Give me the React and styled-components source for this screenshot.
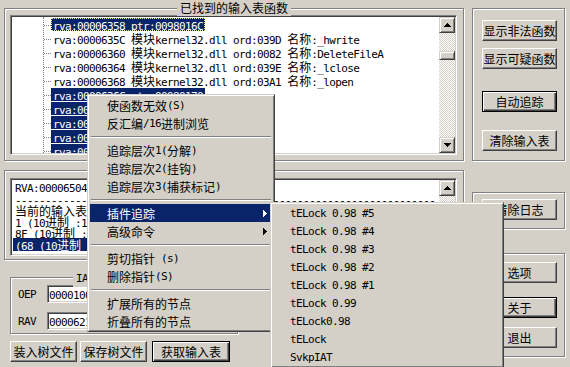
import React from 'react';
import styled, { createGlobalStyle, css } from 'styled-components';

const FACE = '#d4d0c8';
const SHADOW = '#808080';
const DARK = '#404040';
const HILITE = '#0a246a';

const GlobalStyle = createGlobalStyle`
  html, body { margin: 0; padding: 0; background: ${FACE}; }
  body {
    width: 570px;
    height: 367px;
    overflow: hidden;
    font-family: "Noto Sans CJK SC", "Noto Sans", sans-serif;
    font-size: 12px;
    color: #000;
  }
  * { box-sizing: border-box; }
`;

// ---- mixed text: half-width mono for ascii, 12px for han ----
const CJK_RE = /([\u2e80-\u9fff\u3000-\u303f\uff00-\uffef]+)/;

const Ascii = styled.span`
  font-family: "DejaVu Sans Mono", "Liberation Mono", monospace;
  font-size: 11px;
  letter-spacing: -0.62px;
  white-space: pre;
`;

const Han = styled.span`
  font-family: "Noto Sans CJK SC", sans-serif;
  font-size: 12px;
  white-space: pre;
`;

const Txt = ({ children }) =>
  String(children)
    .split(CJK_RE)
    .filter(Boolean)
    .map((part, i) => (CJK_RE.test(part) ? <Han key={i}>{part}</Han> : <Ascii key={i}>{part}</Ascii>));

// ---- bevels ----
const raised = css`
  border: 1px solid;
  border-color: ${FACE} ${DARK} ${DARK} ${FACE};
  box-shadow: inset 1px 1px 0 #fff, inset -1px -1px 0 ${SHADOW};
`;

const sunken = css`
  border: 1px solid;
  border-color: ${SHADOW} #fff #fff ${SHADOW};
  box-shadow: inset 1px 1px 0 ${DARK}, inset -1px -1px 0 ${FACE};
  padding: 1px;
`;

// ---- layout ----
const Window = styled.div`
  position: relative;
  width: 570px;
  height: 367px;
  display: flex;
  gap: 8px;
  padding-left: 4px;
`;

const Column = styled.div`
  width: ${p => p.$w}px;
  flex-shrink: 0;
  display: flex;
  flex-direction: column;
`;

const Group = styled.div`
  position: relative;
  flex-shrink: 0;
  height: ${p => p.$h}px;
  width: ${p => (p.$w ? `${p.$w}px` : 'auto')};
  margin-top: ${p => p.$mt || 0}px;
  padding: ${p => p.$pad || '0'};
  border: 1px solid ${SHADOW};
  box-shadow: inset 1px 1px 0 #fff, 1px 1px 0 #fff;
  display: flex;
  flex-direction: column;
  align-items: flex-start;
`;

const GroupTitle = styled.span`
  position: absolute;
  top: -9px;
  left: 50%;
  transform: translateX(-50%);
  padding: 0 3px;
  line-height: 16px;
  background: ${FACE};
  white-space: nowrap;
`;

const Button = styled.button`
  width: ${p => p.$w || 75}px;
  height: 21px;
  margin: ${p => p.$mt || 0}px 0 0 ${p => p.$ml || 0}px;
  padding: 0;
  flex-shrink: 0;
  display: flex;
  align-items: center;
  justify-content: center;
  background: ${FACE};
  color: #000;
  font-family: "Noto Sans CJK SC", sans-serif;
  font-size: 12px;
  line-height: 1;
  white-space: nowrap;
  border: 1px solid;
  border-color: #fff ${DARK} ${DARK} #fff;
  box-shadow: inset -1px -1px 0 ${SHADOW};
  ${p =>
    p.$default &&
    css`
      border-color: #000;
      box-shadow: inset 1px 1px 0 #fff, inset -1px -1px 0 ${DARK}, inset -2px -2px 0 ${SHADOW};
    `}
`;

// ---- list boxes ----
const ListFrame = styled.div`
  ${sunken};
  width: ${p => p.$w}px;
  height: ${p => p.$h}px;
  display: flex;
  flex-shrink: 0;
`;

const WhiteArea = styled.div`
  flex: 1;
  background: #fff;
  overflow: hidden;
  padding-left: ${p => p.$pl || 0}px;
`;

const ScrollBar = styled.div`
  width: 16px;
  flex-shrink: 0;
  display: flex;
  flex-direction: column;
  background: repeating-conic-gradient(#fff 0 25%, ${FACE} 0 50%) 0 0 / 2px 2px;
`;

const ScrollButton = styled.div`
  ${raised};
  width: 16px;
  height: ${p => p.$h || 16}px;
  margin-top: ${p => (p.$auto ? 'auto' : `${p.$mt || 0}px`)};
  flex-shrink: 0;
  background-color: ${FACE};
  display: flex;
  align-items: center;
  justify-content: center;
`;

const ArrowIcon = ({ dir, color = '#000' }) => {
  const d = {
    up: 'M3 0h1v1h1v1h1v1h1v1H0V3h1V2h1V1h1z',
    down: 'M0 0H7v1h-1v1h-1v1h-1v1h-1V3h-1V2h-1V1H0z',
    right: 'M0 0h1v1h1v1h1v1h1v1h-1v1h-1v1h-1v1H0z',
  }[dir];
  const size = dir === 'right' ? [4, 7] : [7, 4];
  return (
    <svg width={size[0]} height={size[1]} viewBox={`0 0 ${size[0]} ${size[1]}`} shapeRendering="crispEdges">
      <path d={d} fill={color} />
    </svg>
  );
};

// tree
const TreeLines = styled.div`
  margin-left: 31px;
  height: 100%;
  padding-top: 1px;
  border-left: 1px dotted ${SHADOW};
`;

const TreeRow = styled.div`
  height: 14px;
  display: flex;
  align-items: flex-start;
`;

const Connector = styled.span`
  width: 7px;
  margin-top: 7px;
  border-top: 1px dotted ${SHADOW};
  flex-shrink: 0;
`;

const TreeLabel = styled.span`
  height: 13px;
  line-height: 13px;
  padding: 0 2px;
  white-space: pre;
  ${p =>
    p.$sel &&
    css`
      background: ${HILITE};
      color: #fff;
    `}
  ${p => p.$focus && css`outline: 1px dotted #e8e0a0; outline-offset: -1px;`}
`;

// log
const LogRow = styled.div`
  height: ${p => p.$h || 11}px;
  line-height: ${p => p.$h || 11}px;
  padding-left: 2px;
  white-space: pre;
  ${p =>
    p.$sel &&
    css`
      background: ${HILITE};
      color: #fff;
    `}
`;

// IAT fields
const FieldRow = styled.div`
  display: flex;
  align-items: center;
  height: 18px;
  margin-top: ${p => p.$mt || 0}px;
`;

const FieldLabel = styled.span`
  width: 29px;
  line-height: 18px;
`;

const Field = styled.div`
  ${sunken};
  width: 80px;
  height: 18px;
  background: #fff;
  padding-left: 1px;
  line-height: 14px;
`;

const ButtonRow = styled.div`
  display: flex;
  margin-top: ${p => p.$mt || 0}px;
`;

const Bottom = styled.div`
  padding-left: 6px;
  margin-top: 17px;
  display: flex;
  flex-direction: column;
`;

// ---- menus ----
const Menu = styled.div`
  position: absolute;
  left: ${p => p.$x}px;
  top: ${p => p.$y}px;
  width: ${p => p.$w}px;
  z-index: ${p => p.$z || 10};
  background: ${FACE};
  border: 1px solid;
  border-color: ${FACE} ${DARK} ${DARK} ${FACE};
  box-shadow: inset 1px 1px 0 #fff, inset -1px -1px 0 ${SHADOW};
  padding: 1px 2px;
`;

const MenuItem = styled.div`
  height: 18px;
  display: flex;
  align-items: center;
  padding-left: 17px;
  white-space: pre;
  ${p =>
    p.$hot &&
    css`
      background: ${HILITE};
      color: #fff;
    `}
`;

const SubArrow = styled.span`
  margin-left: auto;
  margin-right: 5px;
  display: flex;
`;

const MenuSep = styled.div`
  height: 9px;
  display: flex;
  align-items: center;
  margin: 0 1px;
  &::after {
    content: '';
    width: 100%;
    border-top: 1px solid ${SHADOW};
    border-bottom: 1px solid #fff;
  }
`;

const treeRows = [
  { text: 'rva:00006358 ptr:0098016C', sel: true, focus: true },
  { text: 'rva:0000635C 模块kernel32.dll ord:039D 名称:_hwrite' },
  { text: 'rva:00006360 模块kernel32.dll ord:0082 名称:DeleteFileA' },
  { text: 'rva:00006364 模块kernel32.dll ord:039E 名称:_lclose' },
  { text: 'rva:00006368 模块kernel32.dll ord:03A1 名称:_lopen' },
  { text: 'rva:0000636C ptr:00980170', sel: true },
  { text: 'rva:00006370 ptr:00980174', sel: true },
  { text: 'rva:00006374 ptr:00980178', sel: true },
  { text: 'rva:00006378 ptr:0098017C', sel: true },
  { text: 'rva:0000637C ptr:00980180', sel: true },
];

const logRows = [
  { text: 'RVA:00006504 Size:00000150', h: 13 },
  { text: '-'.repeat(70), h: 12 },
  { text: '当前的输入表:' },
  { text: '1 (10进制 :1) 个有效模块' },
  { text: '8F (10进制 :143) 个输入函数。' },
  { text: '(68 (10进制 :104) 个无效函数)', sel: true, h: 13 },
];

const mainMenu = [
  { label: '使函数无效(S)' },
  { label: '反汇编/16进制浏览' },
  'sep',
  { label: '追踪层次1(分解)' },
  { label: '追踪层次2(挂钩)' },
  { label: '追踪层次3(捕获标记)' },
  'sep',
  { label: '插件追踪', sub: true, hot: true },
  { label: '高级命令', sub: true },
  'sep',
  { label: '剪切指针 (s)' },
  { label: '删除指针(S)' },
  'sep',
  { label: '扩展所有的节点' },
  { label: '折叠所有的节点' },
];

const pluginMenu = [
  'tELock 0.98 #5',
  'tELock 0.98 #4',
  'tELock 0.98 #3',
  'tELock 0.98 #2',
  'tELock 0.98 #1',
  'tELock 0.99',
  'tELock0.98',
  'tELock',
  'SvkpIAT',
];

const App = () => {
  return (
    <>
      <GlobalStyle />
      <Window>
        <Column $w={460}>
          <Group $mt={8} $h={153} $pad="6px 6px 0 5px">
            <GroupTitle>已找到的输入表函数</GroupTitle>
            <ListFrame $w={447} $h={140}>
              <WhiteArea>
                <TreeLines>
                  {treeRows.map((r, i) => (
                    <TreeRow key={i}>
                      <Connector />
                      <TreeLabel $sel={r.sel} $focus={r.focus}>
                        <Txt>{r.text}</Txt>
                      </TreeLabel>
                    </TreeRow>
                  ))}
                </TreeLines>
              </WhiteArea>
              <ScrollBar>
                <ScrollButton><ArrowIcon dir="up" /></ScrollButton>
                <ScrollButton $mt={18} $h={9} />
                <ScrollButton $auto><ArrowIcon dir="down" /></ScrollButton>
              </ScrollBar>
            </ListFrame>
          </Group>

          <Group $mt={9} $h={90} $pad="7px 6px 0 5px">
            <ListFrame $w={447} $h={78}>
              <WhiteArea $pl={1}>
                {logRows.map((r, i) => (
                  <LogRow key={i} $h={r.h} $sel={r.sel}>
                    <Txt>{r.text}</Txt>
                  </LogRow>
                ))}
              </WhiteArea>
              <ScrollBar>
                <ScrollButton><ArrowIcon dir="up" /></ScrollButton>
                <ScrollButton $auto $h={9} />
                <ScrollButton><ArrowIcon dir="down" /></ScrollButton>
              </ScrollBar>
            </ListFrame>
          </Group>

          <Bottom>
            <Group $h={57} $w={228} $pad="7px 0 0 7px">
              <GroupTitle><Txt>IAT 所需要的信息</Txt></GroupTitle>
              <FieldRow>
                <FieldLabel><Txt>OEP</Txt></FieldLabel>
                <Field><Txt>00001000</Txt></Field>
              </FieldRow>
              <FieldRow $mt={9}>
                <FieldLabel><Txt>RAV</Txt></FieldLabel>
                <Field><Txt>00006214</Txt></Field>
              </FieldRow>
            </Group>
            <ButtonRow $mt={7}>
              <Button $w={67}>装入树文件</Button>
              <Button $w={67} $ml={3}>保存树文件</Button>
              <Button $w={78} $ml={5} $default>获取输入表</Button>
            </ButtonRow>
          </Bottom>
        </Column>

        <Column $w={93}>
          <Group $mt={8} $h={153} $pad="0 0 0 9px">
            <Button $mt={11}>显示非法函数</Button>
            <Button $mt={7}>显示可疑函数</Button>
            <Button $mt={22} $default>自动追踪</Button>
            <Button $mt={18}>清除输入表</Button>
          </Group>
          <Group $mt={31} $h={37} $pad="0 0 0 9px">
            <Button $mt={6}>清除日志</Button>
          </Group>
          <Group $mt={24} $h={104} $pad="0 0 0 9px">
            <Button $mt={8}>选项</Button>
            <Button $mt={14} $default>关于</Button>
            <Button $mt={9}>退出</Button>
          </Group>
        </Column>

        <Menu $x={87} $y={94} $w={188}>
          {mainMenu.map((m, i) =>
            m === 'sep' ? (
              <MenuSep key={i} />
            ) : (
              <MenuItem key={i} $hot={m.hot}>
                <Txt>{m.label}</Txt>
                {m.sub && (
                  <SubArrow>
                    <ArrowIcon dir="right" color={m.hot ? '#fff' : '#000'} />
                  </SubArrow>
                )}
              </MenuItem>
            )
          )}
        </Menu>

        <Menu $x={270} $y={202} $w={234} $z={11}>
          {pluginMenu.map((label, i) => (
            <MenuItem key={i}>
              <Txt>{label}</Txt>
            </MenuItem>
          ))}
        </Menu>
      </Window>
    </>
  );
};

export default App;
